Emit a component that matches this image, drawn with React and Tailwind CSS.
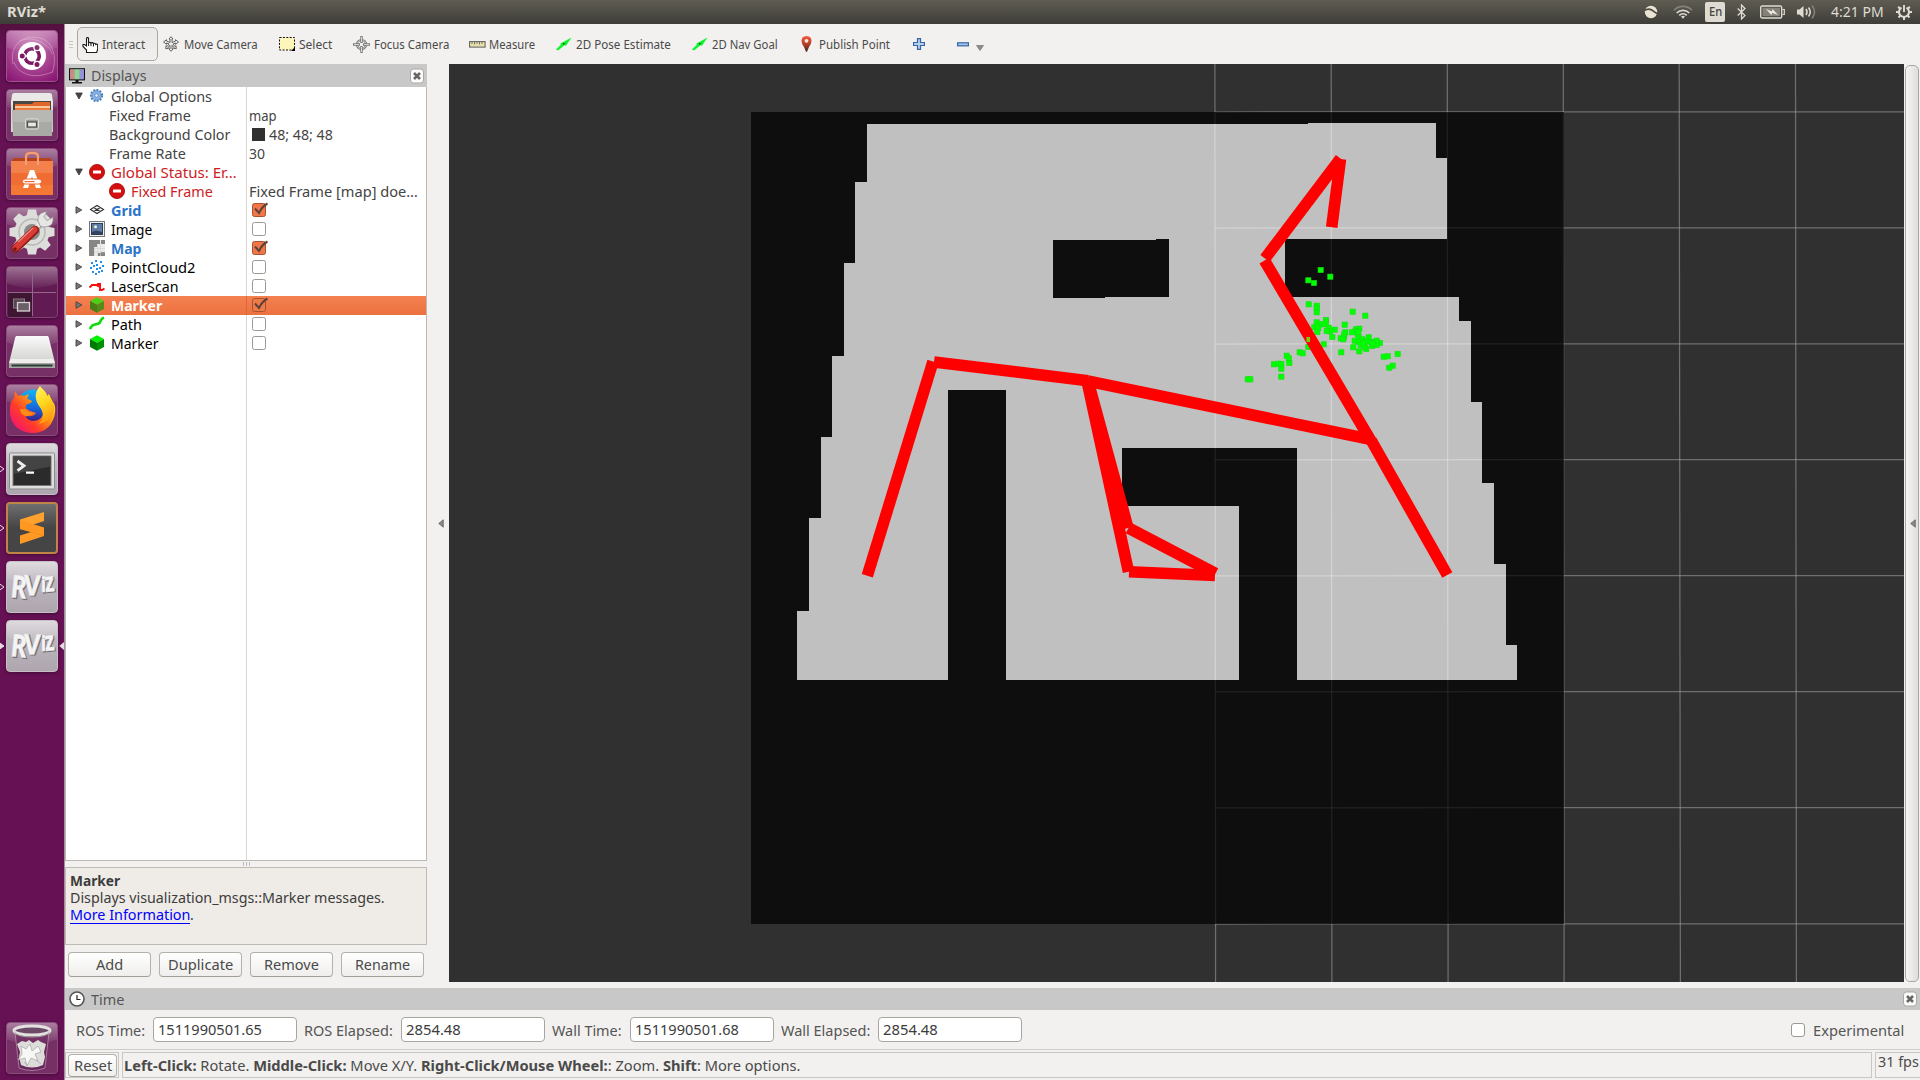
import React, { useLayoutEffect, useRef, useState } from "react";

/* Text run condensed or widened to an exact advance width. */
function T({ w, className = "", children }) {
  const ref = useRef(null);
  const [scale, setScale] = useState(1);
  useLayoutEffect(() => {
    const fit = () => {
      if (ref.current) setScale(w / ref.current.offsetWidth);
    };
    fit();
    document.fonts.ready.then(fit);
  }, [w]);
  return (
    <span className={"inline-block shrink-0 whitespace-nowrap " + className} style={{ width: w }}>
      <span ref={ref} className="inline-block origin-left" style={{ transform: `scaleX(${scale})` }}>
        {children}
      </span>
    </span>
  );
}

/* ---------- top panel ---------- */
function TopPanel() {
  return (
    <header className="flex h-6 shrink-0 items-center bg-linear-to-b from-[#5f5d52] to-[#3e3d38] pl-[7px] text-[14px] text-[#dfdbd2]">
      <T w={39} className="font-bold leading-none">RViz*</T>
      <div className="ml-auto flex h-6 items-center">
        <svg className="mr-[15px]" width="14" height="14" viewBox="0 0 14 14">
          <circle cx="7" cy="7" r="6.2" fill="#ebe4d4" />
          <path d="M.5 5.500c3-2 6.500-1.500 9 .7 1.300 1.100 2.300 2 3.800 2.300" fill="none" stroke="#4d4b44" strokeWidth="1.600" />
        </svg>
        <svg className="mr-[12px]" width="20" height="14" viewBox="0 0 20 14" fill="none" strokeLinecap="butt">
          <path d="M1 5.200a12.500 12.500 0 0 1 18 0" stroke="#85827a" strokeWidth="1.600" />
          <path d="M3.700 8a9 9 0 0 1 12.600 0" stroke="#dfdbd2" strokeWidth="1.700" />
          <path d="M6.300 10.300a5.500 5.500 0 0 1 7.400 0" stroke="#dfdbd2" strokeWidth="1.700" />
          <path d="M8 11.500q2-1.500 4 0l-2 2.300z" fill="#dfdbd2" />
        </svg>
        <span className="mr-[12px] flex h-5 w-5 items-center justify-center rounded-xs bg-[#dfdbd2] text-[12px] font-medium text-[#45443e]">
          <T w={13} className="leading-none">En</T>
        </span>
        <svg className="mr-[14px]" width="9" height="16" viewBox="0 0 9 16" fill="none" stroke="#dfdbd2" strokeWidth="1.300">
          <path d="M.7 4.500l7.300 7-3.500 3.500V1L8 4.500l-7.300 7" />
        </svg>
        <svg className="mr-[11px]" width="25" height="14" viewBox="0 0 25 14">
          <rect x=".7" y="1" width="21" height="12" rx="1.500" fill="none" stroke="#dfdbd2" strokeWidth="1.400" />
          <rect x="2.500" y="2.800" width="17.500" height="8.400" fill="#85827a" />
          <path d="M22.500 4.500h1.800v5h-1.800" fill="none" stroke="#dfdbd2" strokeWidth="1.200" />
          <path d="M6 4l6 2.500.5-2.500L18 10l-6-2.200-.5 2.500z" fill="#f0ece2" />
        </svg>
        <svg className="mr-[14px]" width="21" height="16" viewBox="0 0 21 16" fill="none">
          <path d="M1 5.500h2.500L7.500 2v12l-4-3.500H1z" fill="#dfdbd2" />
          <path d="M10 5q2 3 0 6M12.500 3.500q3.500 4.500 0 9" stroke="#dfdbd2" strokeWidth="1.600" />
          <path d="M16 1.500q5 6.500 0 13" stroke="#85827a" strokeWidth="1.600" />
        </svg>
        <T w={53} className="leading-none">4:21 PM</T>
        <svg className="mr-[8px] ml-[12px]" width="16" height="16" viewBox="0 0 16 16" fill="none" stroke="#dfdbd2">
          <path d="M10.500 3.600a5 5 0 1 1-5 0" strokeWidth="2" />
          <path d="M8 1v7" strokeWidth="1.900" />
          <path d="M2.200 2.700l2 2M13.800 2.700l-2 2M0 8h3M16 8h-3M2.500 13.500l2-2M13.500 13.500l-2-2M8 13v3" strokeWidth="2" />
        </svg>
      </div>
    </header>
  );
}

/* ---------- launcher ---------- */
function Tile({ tone = "clear", left, right, children }) {
  const tones = {
    clear: "bg-[#763065] border-[#8c4a7d]",
    violet: "bg-[#8d2a75] border-[#a2508e]",
    grey: "bg-linear-to-b from-[#c9c3c9] to-[#aea5ae] border-[#c6c0c6]",
    dark: "bg-linear-to-b from-[#6f6f6f] via-[#454545] to-[#454545] border-2 border-[#c08447]",
    dim: "bg-[#611a52] border-[#7e4573]",
  };
  return (
    <div className="relative flex h-[52px] shrink-0 items-center">
      <svg className="h-3 w-[6px] shrink-0" viewBox="0 0 6 12">
        {left && <path d="M-1 2.500L4 6l-5 3.500z" fill={left === "full" ? "#e6dce4" : "none"} stroke="#e6dce4" strokeWidth="1" />}
      </svg>
      <div className={"flex size-[52px] shrink-0 items-center justify-center overflow-hidden rounded-[4px] border shadow-[0_1px_3px_rgba(0,0,0,.35)] " + tones[tone]}>
        {children}
      </div>
      <svg className="h-3 w-[6px] shrink-0" viewBox="0 0 6 12">
        {right && <path d="M6 2L1.300 6 6 10z" fill="#e6dce4" />}
      </svg>
    </div>
  );
}

function Gloss() {
  return (
    <>
      <defs>
        <linearGradient id="gloss" x1="0" y1="0" x2="0" y2="1">
          <stop offset="0" stopColor="#fff" stopOpacity=".4" />
          <stop offset="1" stopColor="#fff" stopOpacity="0.03" />
        </linearGradient>
      </defs>
      <path d="M0 0h52v17Q26 27 0 17z" fill="url(#gloss)" />
    </>
  );
}

const art = "size-[52px] shrink-0";

function UbuntuArt() {
  return (
    <svg className={art} viewBox="0 0 52 52">
      <defs>
        <radialGradient id="ub" cx=".5" cy=".35" r=".75">
          <stop offset="0" stopColor="#c678b0" />
          <stop offset="1" stopColor="#8a1674" />
        </radialGradient>
      </defs>
      <rect width="52" height="52" fill="url(#ub)" />
      <path d="M7 34C3 14 18 4 34 8 46 11 52 26 46 43M8 32c4 12 20 18 38 10M14 11C30 4 46 18 46 24" fill="none" stroke="#d9a5cb" strokeWidth="1" opacity=".55" />
      <circle cx="26" cy="26" r="14" fill="#fff" />
      <circle cx="26" cy="26" r="7.300" fill="none" stroke="#7c1b62" strokeWidth="3.600" />
      <path d="M26 26L12.500 26M26 26L33 14M26 26L33 38" stroke="#fff" strokeWidth="1.500" />
      {[[16.200, 26], [31, 17.500], [31, 34.500]].map(([x, y]) => (
        <circle key={y} cx={x} cy={y} r="3.100" fill="#7c1b62" stroke="#fff" strokeWidth="1.200" />
      ))}
      <Gloss />
    </svg>
  );
}

function FilesArt() {
  return (
    <svg className={art} viewBox="0 0 52 52">
      <Gloss />
      <path d="M8 4h36l3 9v30H5V13z" fill="#d9d9d7" />
      <path d="M6 6q0-2 3-2h34q3 0 3 2l1 7v3H5v-3z" fill="#e9e9e7" />
      <rect x="7" y="12" width="38" height="12" fill="#4a4743" />
      <path d="M9 15h17l2-2h16v12H9z" fill="#e0662a" />
      <path d="M9 17h35v3H9z" fill="#f6c9a0" />
      <path d="M9 19h35v3H9z" fill="#ee7d3b" />
      <path d="M6 21h41l-1 26H7z" fill="#a9aaa6" />
      <path d="M6 21h41l-.5 12H6.500z" fill="#b7b8b4" />
      <rect x="19.500" y="30" width="13" height="10" rx="1.500" fill="#9b9b98" stroke="#dedfdc" />
      <rect x="21.500" y="33" width="9" height="5" fill="#e8e8e6" stroke="#4b4b49" strokeWidth="1.200" />
    </svg>
  );
}

function SoftwareArt() {
  return (
    <svg className={art} viewBox="0 0 52 52">
      <Gloss />
      <path d="M20 17V9q0-4 4-4h4q4 0 4 4v8" fill="none" stroke="#d9714a" strokeWidth="3" />
      <path d="M5 14l3-4h36l3 4z" fill="#b8431a" />
      <path d="M5 13h42v34H5z" fill="#ef6c33" />
      <path d="M5 13h42v12H5z" fill="#f38a55" opacity=".7" />
      <path d="M5 37h42v10H5z" fill="#f68035" opacity=".6" />
      <path d="M20 17V9q0-4 4-4h4q4 0 4 4v8" fill="none" stroke="#f2a07c" strokeWidth="2" />
      <path d="M24 22h4l7 18h-5l-4-11.500L22 40h-5z" fill="#fff" />
      <rect x="16.500" y="31" width="19" height="5" rx="2.500" fill="#fff" stroke="#ec6a2f" strokeWidth="1" />
      <rect x="18.500" y="33" width="10" height="1.200" fill="#ec6a2f" />
    </svg>
  );
}

function SettingsArt() {
  return (
    <svg className={art} viewBox="0 0 52 52">
      <Gloss />
      <g transform="translate(26 25)" fill="#dddddb">
        {[0, 45, 90, 135, 180, 225, 270, 315].map((a) => (
          <path key={a} d="M-5.500-15l1.500-7.500h8L5.500-15z" transform={`rotate(${a})`} />
        ))}
        <circle r="17.500" />
        <circle r="13" fill="none" stroke="#b9b9b6" strokeWidth="1.500" />
        <circle r="8" fill="#8b8a88" />
      </g>
      <path d="M28 24L37 15" stroke="#a4a4a2" strokeWidth="6" />
      <path d="M28 23L36 14" stroke="#e6e6e4" strokeWidth="4.500" />
      <path d="M32 14q-1-7 6-9l3-.3-3 5 3 4 5-3 1-1q1 9-6 10-5 1-7-1z" fill="#e6e6e4" stroke="#8a8a88" strokeWidth=".7" />
      <path d="M9.500 41.500L29 23" stroke="#8e1b15" strokeWidth="8.500" strokeLinecap="round" />
      <path d="M9.500 41L28.500 22.500" stroke="#d93c34" strokeWidth="6" strokeLinecap="round" />
      <path d="M12 35L27 21" stroke="#f08a80" strokeWidth="1.300" />
      <circle cx="9" cy="42" r="1.700" fill="#6f1410" />
    </svg>
  );
}

function WorkspaceArt() {
  return (
    <svg className={art} viewBox="0 0 52 52">
      <Gloss />
      <rect x="2" y="26.500" width="24" height="25" fill="#3e1634" />
      <path d="M26.500 2v48M2 26.500h48" stroke="#92688a" strokeWidth="1" />
      <rect x="7.500" y="33" width="11" height="9" fill="#55454f" stroke="#8a7886" />
      <rect x="11.500" y="36.500" width="12" height="8.500" fill="#6b6068" stroke="#d8d2d6" strokeWidth="1.300" />
    </svg>
  );
}

function DriveArt() {
  return (
    <svg className={art} viewBox="0 0 52 52">
      <Gloss />
      <defs>
        <linearGradient id="drv" x1="0" y1="0" x2="0" y2="1">
          <stop offset="0" stopColor="#fafafa" />
          <stop offset="1" stopColor="#c9c9c7" />
        </linearGradient>
      </defs>
      <path d="M10.500 11h31q1 0 1.300 1.500L49 38v5H3v-5L9.200 12.500Q9.500 11 10.500 11z" fill="url(#drv)" />
      <path d="M5 34h42l2 4H3z" fill="#eeeeec" />
      <path d="M3 38h46v4q0 1-1 1H4q-1 0-1-1z" fill="#a5a8a5" />
      <rect x="5.500" y="39.500" width="41" height="2" fill="#2c3a35" />
    </svg>
  );
}

function FirefoxArt() {
  return (
    <svg className={art} viewBox="0 0 52 52">
      <Gloss />
      <defs>
        <linearGradient id="ffa" x1=".1" y1=".9" x2=".9" y2=".2">
          <stop offset="0" stopColor="#f5136f" />
          <stop offset=".35" stopColor="#ff3b2b" />
          <stop offset=".7" stopColor="#ff9a12" />
          <stop offset="1" stopColor="#ffd52a" />
        </linearGradient>
        <linearGradient id="ffb" x1="0" y1="0" x2="0" y2="1">
          <stop offset="0" stopColor="#12b2f5" />
          <stop offset=".6" stopColor="#1668dc" />
          <stop offset="1" stopColor="#3a1f8c" />
        </linearGradient>
        <linearGradient id="ffc" x1="0" y1="0" x2=".3" y2="1">
          <stop offset="0" stopColor="#fff36b" />
          <stop offset=".5" stopColor="#ffd91f" />
          <stop offset="1" stopColor="#ff9a10" />
        </linearGradient>
      </defs>
      <circle cx="27" cy="21" r="15.500" fill="url(#ffb)" />
      <path d="M9 7l3 5c2-1 4-1 6 0l5-2-2 5c3 1 5 1 5 3l-6 3c-1 4 1 4 4 6l6 2c-3 5-9 3-11 2 3 8 14 8 18 0 3-7 0-13-2-16l13 4q3 8-1 17c-5 12-16 13-21 13C11 48 3 38 4 25c0-6 2-9 4-11z" fill="url(#ffa)" />
      <path d="M34 2c-7 8-4 15-1 20 5 6 5 12 0 18 13-3 16-12 15-19-1-4-4-8-5-11l-2 2c0-4-4-6-7-10z" fill="url(#ffc)" />
      <path d="M14 25q6-1 9 3l5 1q-4 4-9 3-5-2-5-7z" fill="#ff8a16" />
    </svg>
  );
}

function TerminalArt() {
  return (
    <svg className={art} viewBox="0 0 52 52">
      <Gloss />
      <rect x="3.500" y="10" width="45" height="36" rx="1" fill="#dedede" stroke="#8b8b8b" />
      <rect x="6.500" y="12.500" width="39" height="30.500" fill="#777" />
      <rect x="7.500" y="13.500" width="37" height="28.500" fill="#2b2b2b" />
      <path d="M7.500 13.500h37v10L7.500 31z" fill="#4a4a4a" opacity=".8" />
      <path d="M11.500 18l6.500 4.800-6.500 4.800" fill="none" stroke="#eee" strokeWidth="2.800" />
      <path d="M20 29.700h8" stroke="#fff" strokeWidth="2.200" />
    </svg>
  );
}

function SublimeArt() {
  return (
    <svg className={art} viewBox="0 0 52 52">
      <path d="M14 33.500L38 26v8l-24 8z" fill="#ff9a24" />
      <path d="M14 27l24 7v-8l-14-4z" fill="#e98212" />
      <path d="M14 17.500L38 10v9l-24 8z" fill="#ffa12e" />
      <path d="M14 18l24 7.500v8L14 27z" fill="#ff9822" />
    </svg>
  );
}

function RvizArt() {
  const letters = [
    ["R", 4, 36, 31, 6, 0.78],
    ["V", 17.500, 34, 28, 2, 0.92],
    ["i", 35, 31, 21, 0, 0.8],
    ["z", 39.500, 31, 27, -6, 0.72],
  ];
  return (
    <svg className={art} viewBox="0 0 52 52" fontFamily="Noto Sans, sans-serif" fontWeight="700">
      <Gloss />
      {letters.map(([c, x, y, s, r, k]) => (
        <g key={c} transform={`translate(${x} ${y}) rotate(${r}) scale(${k} 1)`} fontSize={s}>
          <text x="1.300" y=".8" fill="#757075" stroke="#757075" strokeWidth="1">{c}</text>
          <text fill="#f4f4f4" stroke="#f0f0f0" strokeWidth=".5">{c}</text>
        </g>
      ))}
    </svg>
  );
}

function TrashArt() {
  return (
    <svg className={art} viewBox="0 0 52 52">
      <Gloss />
      <path d="M9 10l4 36q13 5 26 0l4-36z" fill="#5e1a4f" opacity=".45" />
      <path d="M9 10l4 36q13 5 26 0l4-36" fill="none" stroke="#cdb4c8" strokeWidth=".8" opacity=".7" />
      <path d="M11 22l5-3 4 1 3-2 4 3 5-3 3 2 5 2-2 8 1 5-2 8q-11 5-22 0l-2-8 1-5z" fill="#dcdcda" />
      <path d="M15 24l5 3 4-5 2 7 6-5 3 6-6 2 3 7-7-3-4 8-2-8-7 2 4-6zM18 40l4 4M30 38l5 4" fill="#f7f7f5" stroke="#a5a5a3" strokeWidth=".7" />
      <ellipse cx="26" cy="8.500" rx="18" ry="4.500" fill="#6d4a66" stroke="#e2e2e0" strokeWidth="3" />
      <path d="M8.500 10q3 5 17.500 5t17.500-5" fill="none" stroke="#9d9d9b" strokeWidth="1" />
    </svg>
  );
}

function Launcher() {
  return (
    <nav className="flex w-[65px] shrink-0 flex-col gap-[7px] border-r border-[#a98aa3] bg-linear-to-b from-[#54103f] via-[#651153] via-2% to-[#651153] pt-[6px] pb-[6px]">
      <Tile tone="violet"><UbuntuArt /></Tile>
      <Tile><FilesArt /></Tile>
      <Tile><SoftwareArt /></Tile>
      <Tile><SettingsArt /></Tile>
      <Tile tone="dim"><WorkspaceArt /></Tile>
      <Tile><DriveArt /></Tile>
      <Tile><FirefoxArt /></Tile>
      <Tile tone="grey" left="open"><TerminalArt /></Tile>
      <Tile tone="dark" left="open"><SublimeArt /></Tile>
      <Tile tone="grey" left="open"><RvizArt /></Tile>
      <Tile tone="grey" left="full" right><RvizArt /></Tile>
      <div className="mt-auto"><Tile><TrashArt /></Tile></div>
    </nav>
  );
}

/* ---------- toolbar ---------- */
const HandIcon = () => (
  <svg width="16" height="16" viewBox="0 0 16 16">
    <path d="M4.500 15.500L4.500 13 1 9.500V7.500h1.500l2 1.500V1.500q0-1 1-1t1 1V6q.2-.7 1.200-.7t1.200.9q.3-.6 1.300-.6t1.200 1q.4-.4 1.200-.3 1 .1 1.100 1.100.4-.4 1-.3 1 .2 1 1.300V12l-1 3.500z" fill="#fff" stroke="#1a1a1a" strokeWidth="1.100" />
    <path d="M6.600 6v3M9 6.500v2.700M11.500 7v2.500" stroke="#1a1a1a" />
  </svg>
);
const MoveIcon = () => (
  <svg width="16" height="16" viewBox="0 0 16 16" fill="#eee" stroke="#555" strokeWidth=".9">
    <path d="M8 .7L10 3H9v3.500l3.500-1.500V3.700l3 2.300-3 2.300V7L10 8l2 2.500 1-.8.300 3-3-.4.800-.9L9 9.300V13h1l-2 2.300L6 13h1V9.300l-2.100 2.100.8.900-3 .4.300-3 1 .8L6 8 3.500 7v1.300L.5 6l3-2.300V5L7 6.500V3H6z" />
  </svg>
);
const SelectIcon = () => (
  <svg width="16" height="14" viewBox="0 0 16 14">
    <rect x=".5" y=".5" width="15" height="12.500" fill="#fdf6bb" stroke="#111" strokeDasharray="2 1.400" />
    <path d="M16 10v4h-4z" fill="#000" />
  </svg>
);
const FocusIcon = () => (
  <svg width="17" height="17" viewBox="0 0 17 17" fill="none">
    <circle cx="8.500" cy="8.500" r="4.500" stroke="#777" strokeWidth="2.200" />
    <circle cx="8.500" cy="8.500" r="4.500" stroke="#d8d8d8" strokeWidth=".7" />
    <path d="M8.500 0v7M8.500 10v7M0 8.500h7M10 8.500h7" stroke="#777" strokeWidth="2.400" />
    <path d="M8.500 1v5M8.500 11v5M1 8.500h5M11 8.500h5" stroke="#e3e3e3" strokeWidth=".9" />
  </svg>
);
const RulerIcon = () => (
  <svg width="17" height="7" viewBox="0 0 17 7">
    <rect x=".6" y=".6" width="15.500" height="5.500" fill="#eae2aa" stroke="#666" strokeWidth="1.100" />
    <path d="M3 1v2M5.500 1v2.500M8 1v2M10.500 1v2.500M13 1v2" stroke="#666" strokeWidth=".9" />
  </svg>
);
const PoseIcon = () => (
  <svg width="16" height="14" viewBox="0 0 16 14">
    <path d="M0 12.500l5-5-1-.8L15.500.5 9.800 9l-1-1L2 13.500z" fill="#0af52a" />
    <circle cx="7.800" cy="6.800" r="1" fill="#0a5a14" />
  </svg>
);
const PinIcon = () => (
  <svg width="11" height="16" viewBox="0 0 11 16">
    <defs>
      <linearGradient id="pin" x1="0" y1="0" x2="0" y2="1">
        <stop offset="0" stopColor="#f05a3c" />
        <stop offset=".5" stopColor="#b8402a" />
        <stop offset="1" stopColor="#3a2a18" />
      </linearGradient>
    </defs>
    <path d="M5.500 0Q10.500.2 10.500 5q0 2.500-2.500 6l-2 4.700h-1L3 11Q.5 7.500.5 5 .5.200 5.500 0z" fill="url(#pin)" />
    <circle cx="5.500" cy="4.800" r="1.900" fill="#fbe9e4" />
  </svg>
);

const tools = [
  { icon: MoveIcon, label: "Move Camera", gap: "ml-[5px]", pad: "ml-[5px]", w: 74 },
  { icon: SelectIcon, label: "Select", gap: "ml-[21px]", pad: "ml-[4px]", w: 33 },
  { icon: FocusIcon, label: "Focus Camera", gap: "ml-[21px]", pad: "ml-[4px]", w: 75 },
  { icon: RulerIcon, label: "Measure", gap: "ml-[20px]", pad: "ml-[3px]", w: 46 },
  { icon: PoseIcon, label: "2D Pose Estimate", gap: "ml-[21px]", pad: "ml-[4px]", w: 95 },
  { icon: PoseIcon, label: "2D Nav Goal", gap: "ml-[21px]", pad: "ml-[4px]", w: 66 },
  { icon: PinIcon, label: "Publish Point", gap: "ml-[23px]", pad: "ml-[7px]", w: 71 },
];

function Toolbar() {
  return (
    <div className="flex h-10 shrink-0 items-center pl-[4px] text-[12px] text-[#4a4a4a]">
      <div className="flex w-[4px] flex-col gap-[2px]">
        <i className="h-px bg-[#c9c7c4]" /><i className="h-px bg-[#c9c7c4]" /><i className="h-px bg-[#c9c7c4]" />
      </div>
      <div className="ml-[4px] flex h-[34px] w-[81px] items-center rounded-[5px] border border-[#aaa7a2] bg-linear-to-b from-[#e9e8e6] to-[#f1f0ee] pt-[2px] pl-[4px]">
        <HandIcon />
        <T w={43} className="ml-[4px] leading-4">Interact</T>
      </div>
      {tools.map(({ icon: Icon, label, gap, pad, w }) => (
        <div key={label} className={"flex items-center " + gap}>
          <Icon />
          <T w={w} className={"pt-px leading-4 " + pad}>{label}</T>
        </div>
      ))}
      <svg className="ml-[23px]" width="12" height="12" viewBox="0 0 12 12">
        <path d="M4.500.6h3v3.900h3.900v3H7.500v3.900h-3V7.500H.6v-3h3.900z" fill="#b8d0f0" stroke="#3465a4" strokeWidth="1.200" />
      </svg>
      <svg className="ml-[32px]" width="12" height="5" viewBox="0 0 12 5">
        <rect x=".6" y=".8" width="10.800" height="3" fill="#a9c6ee" stroke="#3465a4" strokeWidth="1.200" />
      </svg>
      <svg className="mt-[7px] ml-[7px]" width="8" height="6" viewBox="0 0 8 6">
        <path d="M.5.500h7l-3.500 5z" fill="#8c8c8c" stroke="#6c6c6c" strokeWidth=".6" />
      </svg>
    </div>
  );
}

/* ---------- displays panel ---------- */
const CloseButton = () => (
  <svg width="14" height="16" viewBox="0 0 14 16">
    <rect x=".5" y="1" width="13" height="14" rx="3" fill="#fbfbfa" stroke="#aaa8a4" />
    <path d="M4 5l6 6M10 5l-6 6" stroke="#666" strokeWidth="2.600" />
  </svg>
);
const MonitorIcon = () => (
  <svg width="16" height="16" viewBox="0 0 16 16">
    <rect x=".6" y=".8" width="14.800" height="11" fill="#9ac59a" stroke="#111" strokeWidth="1.200" />
    <rect x="1.200" y="1.400" width="4.600" height="9.800" fill="#c98a8a" />
    <rect x="5.800" y="1.400" width="4.600" height="9.800" fill="#8ed58e" />
    <rect x="10.400" y="1.400" width="4.400" height="9.800" fill="#9494dd" />
    <path d="M6.500 12h3v2h3.500v1.500H3V14h3.500z" fill="#111" />
  </svg>
);
const GearIcon = () => (
  <svg width="16" height="16" viewBox="0 0 16 16">
    <circle cx="7.500" cy="7.500" r="5.600" fill="none" stroke="#4a7fc1" strokeWidth="2" strokeDasharray="2 1.200" />
    <circle cx="7.500" cy="7.500" r="4.700" fill="#8fb5e3" stroke="#4a7fc1" strokeWidth=".8" />
    <circle cx="7.500" cy="7.500" r="1.800" fill="#e6effa" stroke="#4a7fc1" strokeWidth=".8" />
  </svg>
);
const ErrorIcon = () => (
  <svg width="16" height="16" viewBox="0 0 16 16">
    <circle cx="8" cy="8" r="7.600" fill="#d40f0f" stroke="#a50808" strokeWidth=".8" />
    <rect x="4" y="6.600" width="8" height="2.800" rx=".5" fill="#fff" />
  </svg>
);
const GridIcon = () => (
  <svg width="16" height="16" viewBox="0 0 16 16" fill="none" stroke="#333" strokeWidth="1.100">
    <path d="M1.500 7.500L8 3.500l6.500 4L8 11.500zM4.700 5.500l6.600 4M11.300 5.500l-6.600 4" />
  </svg>
);
const ImageIcon = () => (
  <svg width="16" height="16" viewBox="0 0 16 16">
    <rect x=".5" y=".5" width="15" height="15" fill="#eeeeec" stroke="#777" />
    <rect x="2.500" y="2.500" width="11" height="11" fill="#5f7ca5" stroke="#2e3f5a" />
    <circle cx="6.500" cy="5.800" r="1.500" fill="#f3f3d8" />
    <path d="M3 13v-2l4-1.500 6 1.500v2z" fill="#33435c" />
  </svg>
);
const MapIcon = () => (
  <svg width="16" height="16" viewBox="0 0 16 16">
    <rect width="16" height="16" fill="#ededeb" />
    <path d="M0 0h11v4H8v3H5v9H0zM12 0h4v4h-4zM12 12h4v4h-7v-3h3z" fill="#868684" />
    <path d="M5.500 7v9M8.500 4v12M11.500 4v12M5 8.500h11M5 12h11" stroke="#cfcfcd" strokeWidth=".6" />
  </svg>
);
const CloudIcon = () => (
  <svg width="16" height="16" viewBox="0 0 16 16" fill="#1a8ff0">
    <path d="M6 1h2v2H6zM11 2h2v2h-2zM2 3h2v2H2zM7 5h2v2H7zM13 6h2v2h-2zM4 6h2v2H4zM1 8h2v2H1zM10 8h2v2h-2zM7 9h2v2H7zM3 12h2v2H3zM12 11h2v2h-2zM9 12h2v2H9zM6 14h2v2H6z" />
  </svg>
);
const LaserIcon = () => (
  <svg width="16" height="16" viewBox="0 0 16 16" fill="none" stroke="#f80a0a" strokeWidth="1.900">
    <path d="M.5 9.500L3 7h4l2 1V6h2v6h2l2.500-1.500" />
  </svg>
);
const cube = (top, left, right) => () => (
  <svg width="16" height="16" viewBox="0 0 16 16">
    <path d="M8 .3l7 3.700-7 3.700L1 4z" fill={top} />
    <path d="M1 4l7 3.700v8L1 12z" fill={left} />
    <path d="M15 4L8 7.700v8l7-3.700z" fill={right} />
  </svg>
);
const CubeIcon = cube("#00f200", "#007a00", "#009100");
const CubeSelIcon = cube("#4cd017", "#4b7d16", "#578a1a");
const PathIcon = () => (
  <svg width="16" height="16" viewBox="0 0 16 16" fill="none" stroke="#0cdc0c" strokeWidth="2.600">
    <path d="M1 13q1.500-4 5-4.500 5-.5 5.500-3.500 1-2.500 3.500-3.500" />
  </svg>
);

function Check({ on, dim }) {
  return (
    <svg className="mb-px ml-[3px]" width="16" height="16" viewBox="0 0 16 16">
      <rect x=".5" y="1.500" width="13" height="13" rx="2" fill={on ? (dim ? "#ef7a49" : "#f0764a") : "#fff"} stroke={on ? "#a8532f" : "#9c9993"} />
      {on && <path d="M3 6.500l4 4.500q3-6.500 8.500-9.500" fill="none" stroke="#5d4337" strokeWidth="2" />}
    </svg>
  );
}

const Arrow = ({ open }) => (
  <svg className="mb-px ml-[9px] shrink-0" width="8" height="8" viewBox="0 0 8 8">
    <path d={open ? "M.7 1h6.600L4 7z" : "M1 .7L6.800 4 1 7.300z"} fill={open ? "#444" : "#777"} stroke="#444" strokeWidth=".9" />
  </svg>
);

const rows = [
  { arrow: "open", icon: GearIcon, label: "Global Options", w: 101, tone: "text-[#444]" },
  { prop: true, label: "Fixed Frame", w: 82, tone: "text-[#444]", value: "map", vw: 28 },
  { prop: true, label: "Background Color", w: 121, tone: "text-[#444]", value: "48; 48; 48", vw: 64, swatch: true },
  { prop: true, label: "Frame Rate", w: 77, tone: "text-[#444]", value: "30", vw: 16 },
  { arrow: "open", icon: ErrorIcon, label: "Global Status: Er…", w: 126, tone: "text-[#cd1c24]" },
  { child: true, icon: ErrorIcon, label: "Fixed Frame", w: 82, tone: "text-[#cd1c24]", value: "Fixed Frame [map] doe…", vw: 169 },
  { arrow: "shut", icon: GridIcon, label: "Grid", w: 30, tone: "text-[#2c74c8] font-bold", check: "on" },
  { arrow: "shut", icon: ImageIcon, label: "Image", w: 41, tone: "text-black", check: "off" },
  { arrow: "shut", icon: MapIcon, label: "Map", w: 30, tone: "text-[#2c74c8] font-bold", check: "on" },
  { arrow: "shut", icon: CloudIcon, label: "PointCloud2", w: 84, tone: "text-black", check: "off" },
  { arrow: "shut", icon: LaserIcon, label: "LaserScan", w: 68, tone: "text-black", check: "off" },
  { arrow: "shut", icon: CubeSelIcon, label: "Marker", w: 51, tone: "text-white font-bold", check: "on", selected: true },
  { arrow: "shut", icon: PathIcon, label: "Path", w: 31, tone: "text-black", check: "off" },
  { arrow: "shut", icon: CubeIcon, label: "Marker", w: 48, tone: "text-black", check: "off" },
];

function Row({ r }) {
  const Icon = r.icon;
  return (
    <div className={"flex h-[19px] shrink-0 items-center " + (r.selected ? "bg-linear-to-b from-[#f58150] to-[#ec7140]" : "")}>
      <div className={"flex h-full w-[181px] shrink-0 items-center border-r " + (r.selected ? "border-[#d9693c]" : "border-[#d9d7d4]")}>
        {r.arrow && <Arrow open={r.arrow === "open"} />}
        {Icon && <span className={"mb-px shrink-0 " + (r.child ? "ml-[43px]" : "ml-[6px]")}><Icon /></span>}
        <T w={r.w} className={"leading-[19px] " + r.tone + (r.prop ? " ml-[43px]" : " ml-[6px]")}>{r.label}</T>
      </div>
      <div className="flex items-center pl-[2px]">
        {r.swatch && <i className="mr-[4px] ml-[3px] block size-[13px] bg-[#303030]" />}
        {r.value && <T w={r.vw} className="leading-[19px] text-[#444]">{r.value}</T>}
        {r.check && <Check on={r.check === "on"} dim={r.selected} />}
      </div>
    </div>
  );
}

function Btn({ children, className = "" }) {
  return (
    <div className={"flex items-center justify-center rounded-[4px] border border-[#b4b1ab] border-b-[#a19e98] bg-linear-to-b from-white to-[#efeeec] " + className}>
      {children}
    </div>
  );
}

function Displays() {
  return (
    <section className="flex w-[362px] shrink-0 flex-col">
      <div className="flex h-[23px] shrink-0 items-center bg-[#c8c8c8] pl-[4px]">
        <MonitorIcon />
        <T w={55} className="ml-[6px] leading-none text-[#555]">Displays</T>
        <span className="mr-[3px] ml-auto"><CloseButton /></span>
      </div>
      <div className="flex h-[774px] shrink-0 border-x border-b border-[#bdb9b2] bg-white">
        <div className="flex w-full flex-col">
          {rows.map((r, i) => <Row key={i} r={r} />)}
          <div className="w-[181px] grow border-r border-[#d9d7d4]" />
        </div>
      </div>
      <div className="flex h-[6px] items-center justify-center gap-[2px]">
        <i className="h-1 w-px bg-[#bbb]" /><i className="h-1 w-px bg-[#bbb]" /><i className="h-1 w-px bg-[#bbb]" />
      </div>
      <div className="flex h-[78px] flex-col border border-[#bfbbb3] bg-[#efebe6] pt-[4px] pl-[4px] leading-[17px] text-[#3c3c3c]">
        <T w={50} className="font-bold">Marker</T>
        <T w={315}>Displays visualization_msgs::Marker messages.</T>
        <div className="flex">
          <T w={120} className="border-b border-[#0000ff] text-[#0000ff]">More Information</T>
          <T w={4}>.</T>
        </div>
      </div>
      <div className="mt-[7px] flex h-[25px] gap-[8px] pl-[3px] text-[#4a4a4a]">
        <Btn className="w-[83px]"><T w={27}>Add</T></Btn>
        <Btn className="w-[83px]"><T w={65}>Duplicate</T></Btn>
        <Btn className="w-[83px]"><T w={55}>Remove</T></Btn>
        <Btn className="w-[83px]"><T w={55}>Rename</T></Btn>
      </div>
    </section>
  );
}

/* ---------- 3D view ---------- */
const freeSpace =
  "M867 124H1308V123H1436V158H1447V239H1285V297H1459V321H1471V402H1482V483H1494V564H1506V645H1517V680H1297V448H1122V506H1239V680H1006V390H948V680H797V611H809V518H821V437H832V356H844V263H855V182H867Z" +
  "M1053 240V298H1105V297H1169V239H1156V240Z";

const segments = [
  [867.300, 575.700, 933, 361.500],
  [934, 362, 1088, 380.700],
  [1087.500, 381, 1369, 439],
  [1087, 381, 1128.500, 571.700],
  [1129, 571.700, 1215, 575.500],
  [1215.500, 573.500, 1128.500, 528],
  [1128, 528, 1088, 381],
  [1264.500, 260.500, 1371, 441],
  [1371, 440, 1447.300, 575],
  [1265, 258.500, 1340.500, 158.500],
  [1340.500, 159, 1331.700, 227.300],
];

/* particle positions in thirds of a pixel from (1220, 130) */
const particles = [
  302, 420, 331, 440, 265, 451, 282, 459, 266, 523, 290, 527, 290, 535, 290, 547, 398, 545, 436, 557, 318, 570,
  318, 577, 290, 577, 310, 583, 300, 583, 374, 584, 283, 592, 290, 588, 295, 595, 292, 606, 326, 593, 344, 599,
  330, 604, 320, 603, 337, 621, 376, 607, 373, 613, 418, 596, 408, 598, 406, 604, 396, 607, 413, 612, 415, 606,
  362, 625, 372, 621, 370, 628, 446, 622, 404, 632, 416, 622, 427, 628, 415, 636, 438, 634, 457, 648, 452, 636,
  465, 636, 480, 639, 470, 645, 470, 632, 311, 643, 265, 651, 400, 652, 422, 645, 439, 657, 418, 664, 364, 667,
  239, 667, 248, 670, 200, 677, 206, 685, 208, 699, 162, 703, 175, 701, 184, 702, 184, 716, 184, 740, 83, 748,
  91, 748, 491, 680, 503, 679, 533, 672, 518, 707, 508, 713, 434, 650, 430, 640, 458, 640,
];
const dots = particles.filter((_, i) => i % 2 === 0).map((x, i) => [1220 + x / 3, 130 + particles[i * 2 + 1] / 3]);

function Viewport() {
  return (
    <svg className="block h-[918px] w-[1455px] shrink-0 bg-[#303030]" viewBox="449 64 1455 918">
      <g stroke="#a8a8a8" strokeOpacity=".52" strokeWidth="1.250">
        {[[1214.900, 1215.600], [1331.200, 1331.900], [1447.300, 1448.100], [1563.300, 1564.100], [1679.200, 1680.400], [1795.500, 1796.400]].map(([a, b]) => (
          <line key={a} x1={a} y1="64" x2={b} y2="982" />
        ))}
        {[112, 228, 344, 459.800, 575.800, 691.800, 807.800, 924].map((y) => (
          <line key={y} x1="1215" y1={y} x2="1904" y2={y - 0.200} />
        ))}
      </g>
      <g opacity=".7">
        <rect x="751" y="112" width="813" height="812" fill="#000" shapeRendering="crispEdges" />
        <path d={freeSpace} fill="#fefefe" fillRule="evenodd" shapeRendering="crispEdges" />
      </g>
      <g fill="#00ff00" stroke="#12e012" strokeWidth=".6">
        {dots.map(([x, y], i) => (
          <rect key={i} x={x - 2.600} y={y - 2.600} width="5.200" height="5.200" />
        ))}
      </g>
      <g stroke="#ff0000" strokeWidth="11.600">
        {segments.map(([x1, y1, x2, y2], i) => (
          <line key={i} x1={x1} y1={y1} x2={x2} y2={y2} />
        ))}
      </g>
      <rect x="1306.500" y="337" width="3.500" height="5" fill="#6fd800" />
    </svg>
  );
}

const Collapse = () => (
  <svg width="6" height="9" viewBox="0 0 6 9">
    <path d="M5.300.8v7.400L.7 4.500z" fill="#8a8a8a" stroke="#555" strokeWidth=".7" />
  </svg>
);

/* ---------- time panel & status bar ---------- */
const Field = ({ label, w, value, vw, gap }) => (
  <div className={"flex items-center " + gap}>
    <T w={w} className="pt-px text-[#555]">{label}</T>
    <div className="ml-[8px] flex h-[25px] w-[144px] items-center rounded-[4px] border border-[#a9a6a1] bg-white pl-[4px] text-[#3c3c3c]">
      <T w={vw}>{value}</T>
    </div>
  </div>
);

function TimePanel() {
  return (
    <section className="shrink-0">
      <div className="flex h-[22px] items-center bg-[#c8c8c8] pl-[4px]">
        <svg width="16" height="16" viewBox="0 0 16 16">
          <circle cx="8" cy="8" r="7" fill="#fff" stroke="#555" strokeWidth="1.600" />
          <path d="M8 4v4.500h3.500" fill="none" stroke="#222" strokeWidth="1.200" />
        </svg>
        <T w={33} className="ml-[6px] pt-px leading-none text-[#555]">Time</T>
        <span className="mr-[3px] ml-auto"><CloseButton /></span>
      </div>
      <div className="flex h-[40px] items-center border-b border-[#cfcdca] pl-[11px]">
        <Field label="ROS Time:" w={69} value="1511990501.65" vw={104} gap="" />
        <Field label="ROS Elapsed:" w={89} value="2854.48" vw={55} gap="ml-[7px]" />
        <Field label="Wall Time:" w={70} value="1511990501.68" vw={104} gap="ml-[7px]" />
        <Field label="Wall Elapsed:" w={89} value="2854.48" vw={55} gap="ml-[7px]" />
        <i className="ml-auto block size-[14px] rounded-[3px] border border-[#9c9993] bg-white" />
        <T w={91} className="mr-[16px] ml-[8px] pt-px text-[#555]">Experimental</T>
      </div>
    </section>
  );
}

function StatusBar() {
  return (
    <footer className="mt-[2px] flex h-[26px] shrink-0 text-[#4a4a4a]">
      <div className="flex w-[54px] items-center border border-[#c9c7c4] pl-[2px]">
        <Btn className="h-[23px] w-[49px]"><T w={38} className="pt-px leading-none">Reset</T></Btn>
      </div>
      <div className="ml-[3px] flex w-[1750px] items-center border border-[#c9c7c4] pl-px">
        <T w={677} className="pt-px">
          <b>Left-Click:</b> Rotate. <b>Middle-Click:</b> Move X/Y. <b>Right-Click/Mouse Wheel:</b>: Zoom. <b>Shift</b>: More options.
        </T>
      </div>
      <div className="ml-[3px] flex grow items-start border border-r-0 border-[#c9c7c4] pl-[2px]">
        <T w={41} className="leading-[18px]">31 fps</T>
      </div>
    </footer>
  );
}

export default function App() {
  return (
    <div className="flex h-[1080px] w-[1920px] flex-col overflow-hidden bg-[#f2f1ef] font-['Noto_Sans',sans-serif] text-[14px]">
      <TopPanel />
      <div className="flex min-h-0 grow">
        <Launcher />
        <main className="flex min-w-0 grow flex-col">
          <Toolbar />
          <div className="flex h-[924px] shrink-0">
            <Displays />
            <div className="flex h-[919px] w-[22px] shrink-0 items-center justify-end pr-[5px]"><Collapse /></div>
            <Viewport />
            <div className="mt-px ml-px flex h-[917px] w-[14px] items-center justify-end rounded-[5px] border border-[#aaa7a2] bg-linear-to-r from-[#f6f5f4] to-[#dedddb] pr-[2px]"><Collapse /></div>
          </div>
          <TimePanel />
          <StatusBar />
        </main>
      </div>
    </div>
  );
}
